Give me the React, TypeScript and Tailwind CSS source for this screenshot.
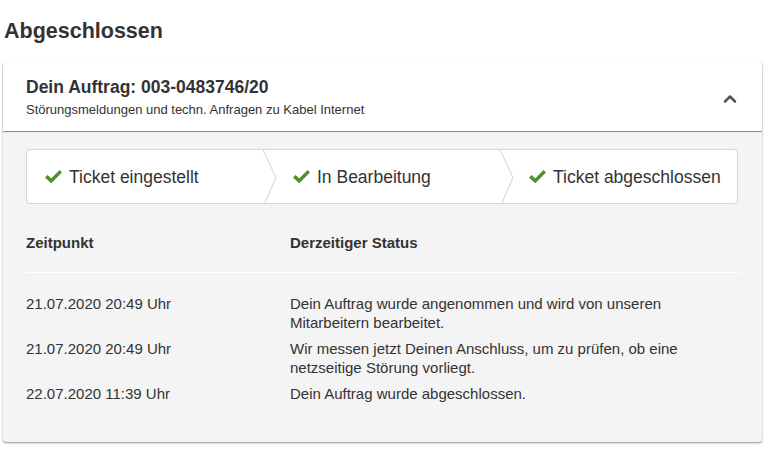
import React from 'react';
import { ChevronUp } from 'lucide-react';

const steps = ['Ticket eingestellt', 'In Bearbeitung', 'Ticket abgeschlossen'];

const history = [
  {
    time: '21.07.2020 20:49 Uhr',
    text: 'Dein Auftrag wurde angenommen und wird von unseren Mitarbeitern bearbeitet.',
  },
  {
    time: '21.07.2020 20:49 Uhr',
    text: 'Wir messen jetzt Deinen Anschluss, um zu prüfen, ob eine netzseitige Störung vorliegt.',
  },
  {
    time: '22.07.2020 11:39 Uhr',
    text: 'Dein Auftrag wurde abgeschlossen.',
  },
];

const Check: React.FC = () => (
  <svg width="19" height="16" viewBox="0 0 19 16" className="shrink-0">
    <path d="M1 8.5 L3.6 6 L7.2 9.4 L15.6 1 L18 3.4 L7.2 14.2 Z" fill="#4f8f2c" />
  </svg>
);

const Separator: React.FC = () => (
  <svg width="15" height="55" viewBox="0 0 15 55" className="shrink-0">
    <polyline points="0,0 13,27.5 1,55" fill="none" stroke="#d2d2d2" strokeWidth="1" />
  </svg>
);

const App: React.FC = () => {
  return (
    <div className="min-h-[470px] bg-white pt-[17px] pr-[17px] text-[#333]" style={{ fontFamily: '"Liberation Sans", Arial, sans-serif' }}>
      {/* Heading */}
      <h2 className="pl-[4px] text-[21.5px] font-bold leading-[28px] text-[#333]">Abgeschlossen</h2>

      {/* Card */}
      <div className="ml-[3px] mt-[17px] w-[759px] rounded-[3px] bg-[#f4f4f4] shadow-[0_1px_2px_rgba(0,0,0,0.45)]">
        {/* Card header */}
        <div className="flex items-center justify-between rounded-t-[3px] bg-white pl-[23px] pr-[22px] pt-[14px] pb-[13px] shadow-[0_1px_1px_rgba(0,0,0,0.45)]">
          <div className="flex flex-col gap-[4px]">
            <div className="text-[17.5px] font-bold leading-[22px] text-[#333]">Dein Auftrag: 003-0483746/20</div>
            <div className="text-[13px] leading-[16px] text-[#333]">Störungsmeldungen und techn. Anfragen zu Kabel Internet</div>
          </div>
          <ChevronUp className="mt-[4px] h-[20px] w-[20px] text-[#555]" strokeWidth={3} />
        </div>

        {/* Card body */}
        <div className="px-[23px] pt-[18px] pb-[39px]">
          {/* Stepper */}
          <div className="flex h-[55px] w-[712px] items-stretch overflow-hidden rounded-[4px] border border-[#d6d6d6] bg-white">
            {steps.map((step, i) => (
              <React.Fragment key={step}>
                {i > 0 && <Separator />}
                <div
                  className={`flex items-center gap-[6px] ${
                    i === 0 ? 'w-[236px] pl-[17px]' : i === 1 ? 'w-[222px] pl-[14px]' : 'flex-1 pl-[13px]'
                  }`}
                >
                  <Check />
                  <span className="text-[17.5px] leading-[22px] text-[#333]">{step}</span>
                </div>
              </React.Fragment>
            ))}
          </div>

          {/* History table */}
          <div className="mt-[29px] w-[714px]">
            <div className="flex border-b border-white pb-[19px] text-[15px] font-bold leading-[20px]">
              <div className="w-[264px]">Zeitpunkt</div>
              <div className="flex-1">Derzeitiger Status</div>
            </div>
            <div className="flex flex-col gap-[7px] pt-[21px] text-[15px] leading-[19px]">
              {history.map((row, i) => (
                <div key={i} className="flex">
                  <div className="w-[264px]">{row.time}</div>
                  <div className="w-[450px]">{row.text}</div>
                </div>
              ))}
            </div>
          </div>
        </div>
      </div>
    </div>
  );
};

export default App;
